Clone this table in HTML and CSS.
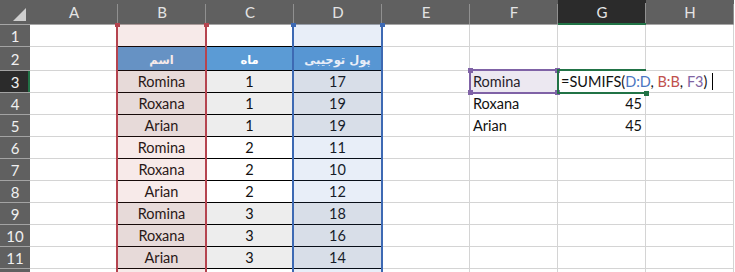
FILE: index.html
```html
<!DOCTYPE html>
<html lang="en">
<head>
<meta charset="utf-8">
<title>Sheet1</title>
<link rel="stylesheet" href="styles.css">
</head>
<body>
<div class="sheet">
  <!-- column headers -->
  <div class="corner"><svg width="30" height="24" viewBox="0 0 30 24"><polygon points="26,8 26,21 13,21" fill="#cfcfcf"/></svg></div>
  <div class="ch">A</div><div class="ch">B</div><div class="ch">C</div><div class="ch">D</div>
  <div class="ch">E</div><div class="ch">F</div><div class="ch sel">G</div><div class="ch">H</div>

  <!-- row 1 -->
  <div class="rh">1</div><div class="c"></div><div class="c tt"></div><div class="c tt"></div><div class="c tt"></div>
  <div class="c"></div><div class="c"></div><div class="c"></div><div class="c"></div>

  <!-- row 2: table header -->
  <div class="rh">2</div><div class="c"></div>
  <div class="c ctr th" lang="fa" dir="rtl">اسم</div>
  <div class="c ctr th" lang="fa" dir="rtl">ماه</div>
  <div class="c ctr th" lang="fa" dir="rtl">پول توجیبی</div>
  <div class="c"></div><div class="c"></div><div class="c"></div><div class="c"></div>

  <!-- row 3 -->
  <div class="rh sel">3</div><div class="c"></div>
  <div class="c ctr t band">Romina</div><div class="c ctr t band">1</div><div class="c ctr t band">17</div>
  <div class="c"></div><div class="c">Romina</div>
  <div class="c edit"><span class="formula">=SUMIFS(<span class="ref-d">D:D</span>, <span class="ref-b">B:B</span>, <span class="ref-f">F3</span>)</span><span class="caret"></span></div>
  <div class="c"></div>

  <!-- row 4 -->
  <div class="rh">4</div><div class="c"></div>
  <div class="c ctr t band">Roxana</div><div class="c ctr t band">1</div><div class="c ctr t band">19</div>
  <div class="c"></div><div class="c">Roxana</div><div class="c num">45</div><div class="c"></div>

  <!-- row 5 -->
  <div class="rh">5</div><div class="c"></div>
  <div class="c ctr t band">Arian</div><div class="c ctr t band">1</div><div class="c ctr t band">19</div>
  <div class="c"></div><div class="c">Arian</div><div class="c num">45</div><div class="c"></div>

  <!-- row 6 -->
  <div class="rh">6</div><div class="c"></div>
  <div class="c ctr t">Romina</div><div class="c ctr t">2</div><div class="c ctr t">11</div>
  <div class="c"></div><div class="c"></div><div class="c"></div><div class="c"></div>

  <!-- row 7 -->
  <div class="rh">7</div><div class="c"></div>
  <div class="c ctr t">Roxana</div><div class="c ctr t">2</div><div class="c ctr t">10</div>
  <div class="c"></div><div class="c"></div><div class="c"></div><div class="c"></div>

  <!-- row 8 -->
  <div class="rh">8</div><div class="c"></div>
  <div class="c ctr t">Arian</div><div class="c ctr t">2</div><div class="c ctr t">12</div>
  <div class="c"></div><div class="c"></div><div class="c"></div><div class="c"></div>

  <!-- row 9 -->
  <div class="rh">9</div><div class="c"></div>
  <div class="c ctr t band">Romina</div><div class="c ctr t band">3</div><div class="c ctr t band">18</div>
  <div class="c"></div><div class="c"></div><div class="c"></div><div class="c"></div>

  <!-- row 10 -->
  <div class="rh">10</div><div class="c"></div>
  <div class="c ctr t band">Roxana</div><div class="c ctr t band">3</div><div class="c ctr t band">16</div>
  <div class="c"></div><div class="c"></div><div class="c"></div><div class="c"></div>

  <!-- row 11 -->
  <div class="rh">11</div><div class="c"></div>
  <div class="c ctr t band">Arian</div><div class="c ctr t band">3</div><div class="c ctr t band">14</div>
  <div class="c"></div><div class="c"></div><div class="c"></div><div class="c"></div>

  <!-- row 12 (only its top edge shows) -->
  <div class="rh"></div><div class="c"></div><div class="c"></div><div class="c"></div><div class="c"></div>
  <div class="c"></div><div class="c"></div><div class="c"></div><div class="c"></div>

  <!-- formula reference highlights -->
  <div class="range range-b"><span class="hdl hdl-tl"></span><span class="hdl hdl-tr"></span></div>
  <div class="range range-d"><span class="hdl hdl-tl"></span><span class="hdl hdl-tr"></span></div>
  <div class="ref-box ref-f3">
    <span class="hdl hdl-tl"></span><span class="hdl hdl-tr"></span>
    <span class="hdl hdl-bl"></span><span class="hdl hdl-br"></span>
  </div>
  <div class="active-cell"><span class="fill-handle"></span></div>
</div>
</body>
</html>
```
FILE: styles.css
```css
html, body {
  margin: 0;
  background: #fff;
  overflow: hidden;
}

.sheet {
  position: relative;
  display: grid;
  grid-template-columns: 30px repeat(8, 88px);
  grid-template-rows: 25px 22px 24px repeat(9, 22px) 22px;
  width: 734px;
  font-family: Lato, "Liberation Sans", sans-serif;
  font-size: 14.5px;
  color: #111;
}

.sheet > div {
  box-sizing: border-box;
}

/* header strip */
.corner {
  background: #606060;
  border-bottom: 1px solid #a6a6a6;
}
.corner svg { display: block; }

.ch {
  display: flex;
  align-items: center;
  justify-content: center;
  background: linear-gradient(#909090, #909090) right bottom / 1px 20px no-repeat, #606060;
  border-bottom: 1px solid #a6a6a6;
  color: #e4e4e4;
  font-size: 15px;
}
.ch.sel {
  background-color: #2b2b2b;
  border-bottom: 2px solid #217346;
}

.rh {
  display: flex;
  align-items: center;
  justify-content: center;
  background: #606060;
  border-bottom: 1px solid #a3a3a3;
  color: #f0f0f0;
  font-size: 15px;
}
.rh.sel {
  background: #2b2b2b;
  box-shadow: inset -2px 0 #217346;
}

/* cells */
.c {
  display: flex;
  align-items: center;
  padding: 0 3px;
  min-width: 0;
  white-space: nowrap;
  border-right: 1px solid #d4d4d4;
  border-bottom: 1px solid #d4d4d4;
}
.ctr { justify-content: center; }
.num { justify-content: flex-end; }

.tt, .t { border-bottom-color: #000; }
.band { background: #ededed; }

.th {
  background: #5b9bd5;
  color: #fff;
  border-bottom-color: #000;
  font-family: "DejaVu Sans", sans-serif;
  font-weight: bold;
  font-size: 11.5px;
  padding-top: 2px;
}

/* cell being edited */
.edit {
  border-right-color: transparent;
  overflow: visible;
}
.formula { white-space: pre; }
.ref-d { color: #4a76c2; }
.ref-b { color: #c0504d; }
.ref-f { color: #8064a2; }
.caret {
  flex: none;
  width: 1px;
  height: 17px;
  margin-left: 5px;
  background: #000;
}

/* formula reference highlights */
.range {
  position: absolute;
  top: 24px;
  width: 91px;
  height: 260px;
  box-sizing: border-box;
  border-left: 2px solid;
  border-right: 2px solid;
}
.range-b {
  left: 116px;
  border-color: #b5444f;
  background: rgba(192, 80, 77, 0.12);
}
.range-d {
  left: 292px;
  border-color: #3d69b3;
  background: rgba(68, 114, 196, 0.12);
}

.hdl {
  position: absolute;
  width: 5px;
  height: 5px;
}
.range-b .hdl { background: #b5444f; }
.range-d .hdl { background: #3d69b3; }
.range .hdl { top: -1px; height: 4px; }
.range .hdl-tl { left: -3.5px; }
.range .hdl-tr { right: -3.5px; }

.ref-box {
  position: absolute;
  box-sizing: border-box;
  border: 2px solid #7f62a6;
  background: rgba(128, 100, 162, 0.15);
}
.ref-f3 {
  left: 469px;
  top: 69px;
  width: 90px;
  height: 25px;
}
.ref-box .hdl { background: #7f62a6; }
.ref-box .hdl-tl { left: -3px; top: -3px; }
.ref-box .hdl-tr { right: -3px; top: -3px; }
.ref-box .hdl-bl { left: -3px; bottom: -3px; }
.ref-box .hdl-br { right: -3px; bottom: -3px; }

.active-cell {
  position: absolute;
  left: 557px;
  top: 69px;
  width: 89px;
  height: 25px;
  box-sizing: border-box;
  border: 2px solid #217346;
  border-right: 0;
}
.fill-handle {
  position: absolute;
  right: -3px;
  bottom: -4px;
  width: 5px;
  height: 5px;
  background: #217346;
}
```
